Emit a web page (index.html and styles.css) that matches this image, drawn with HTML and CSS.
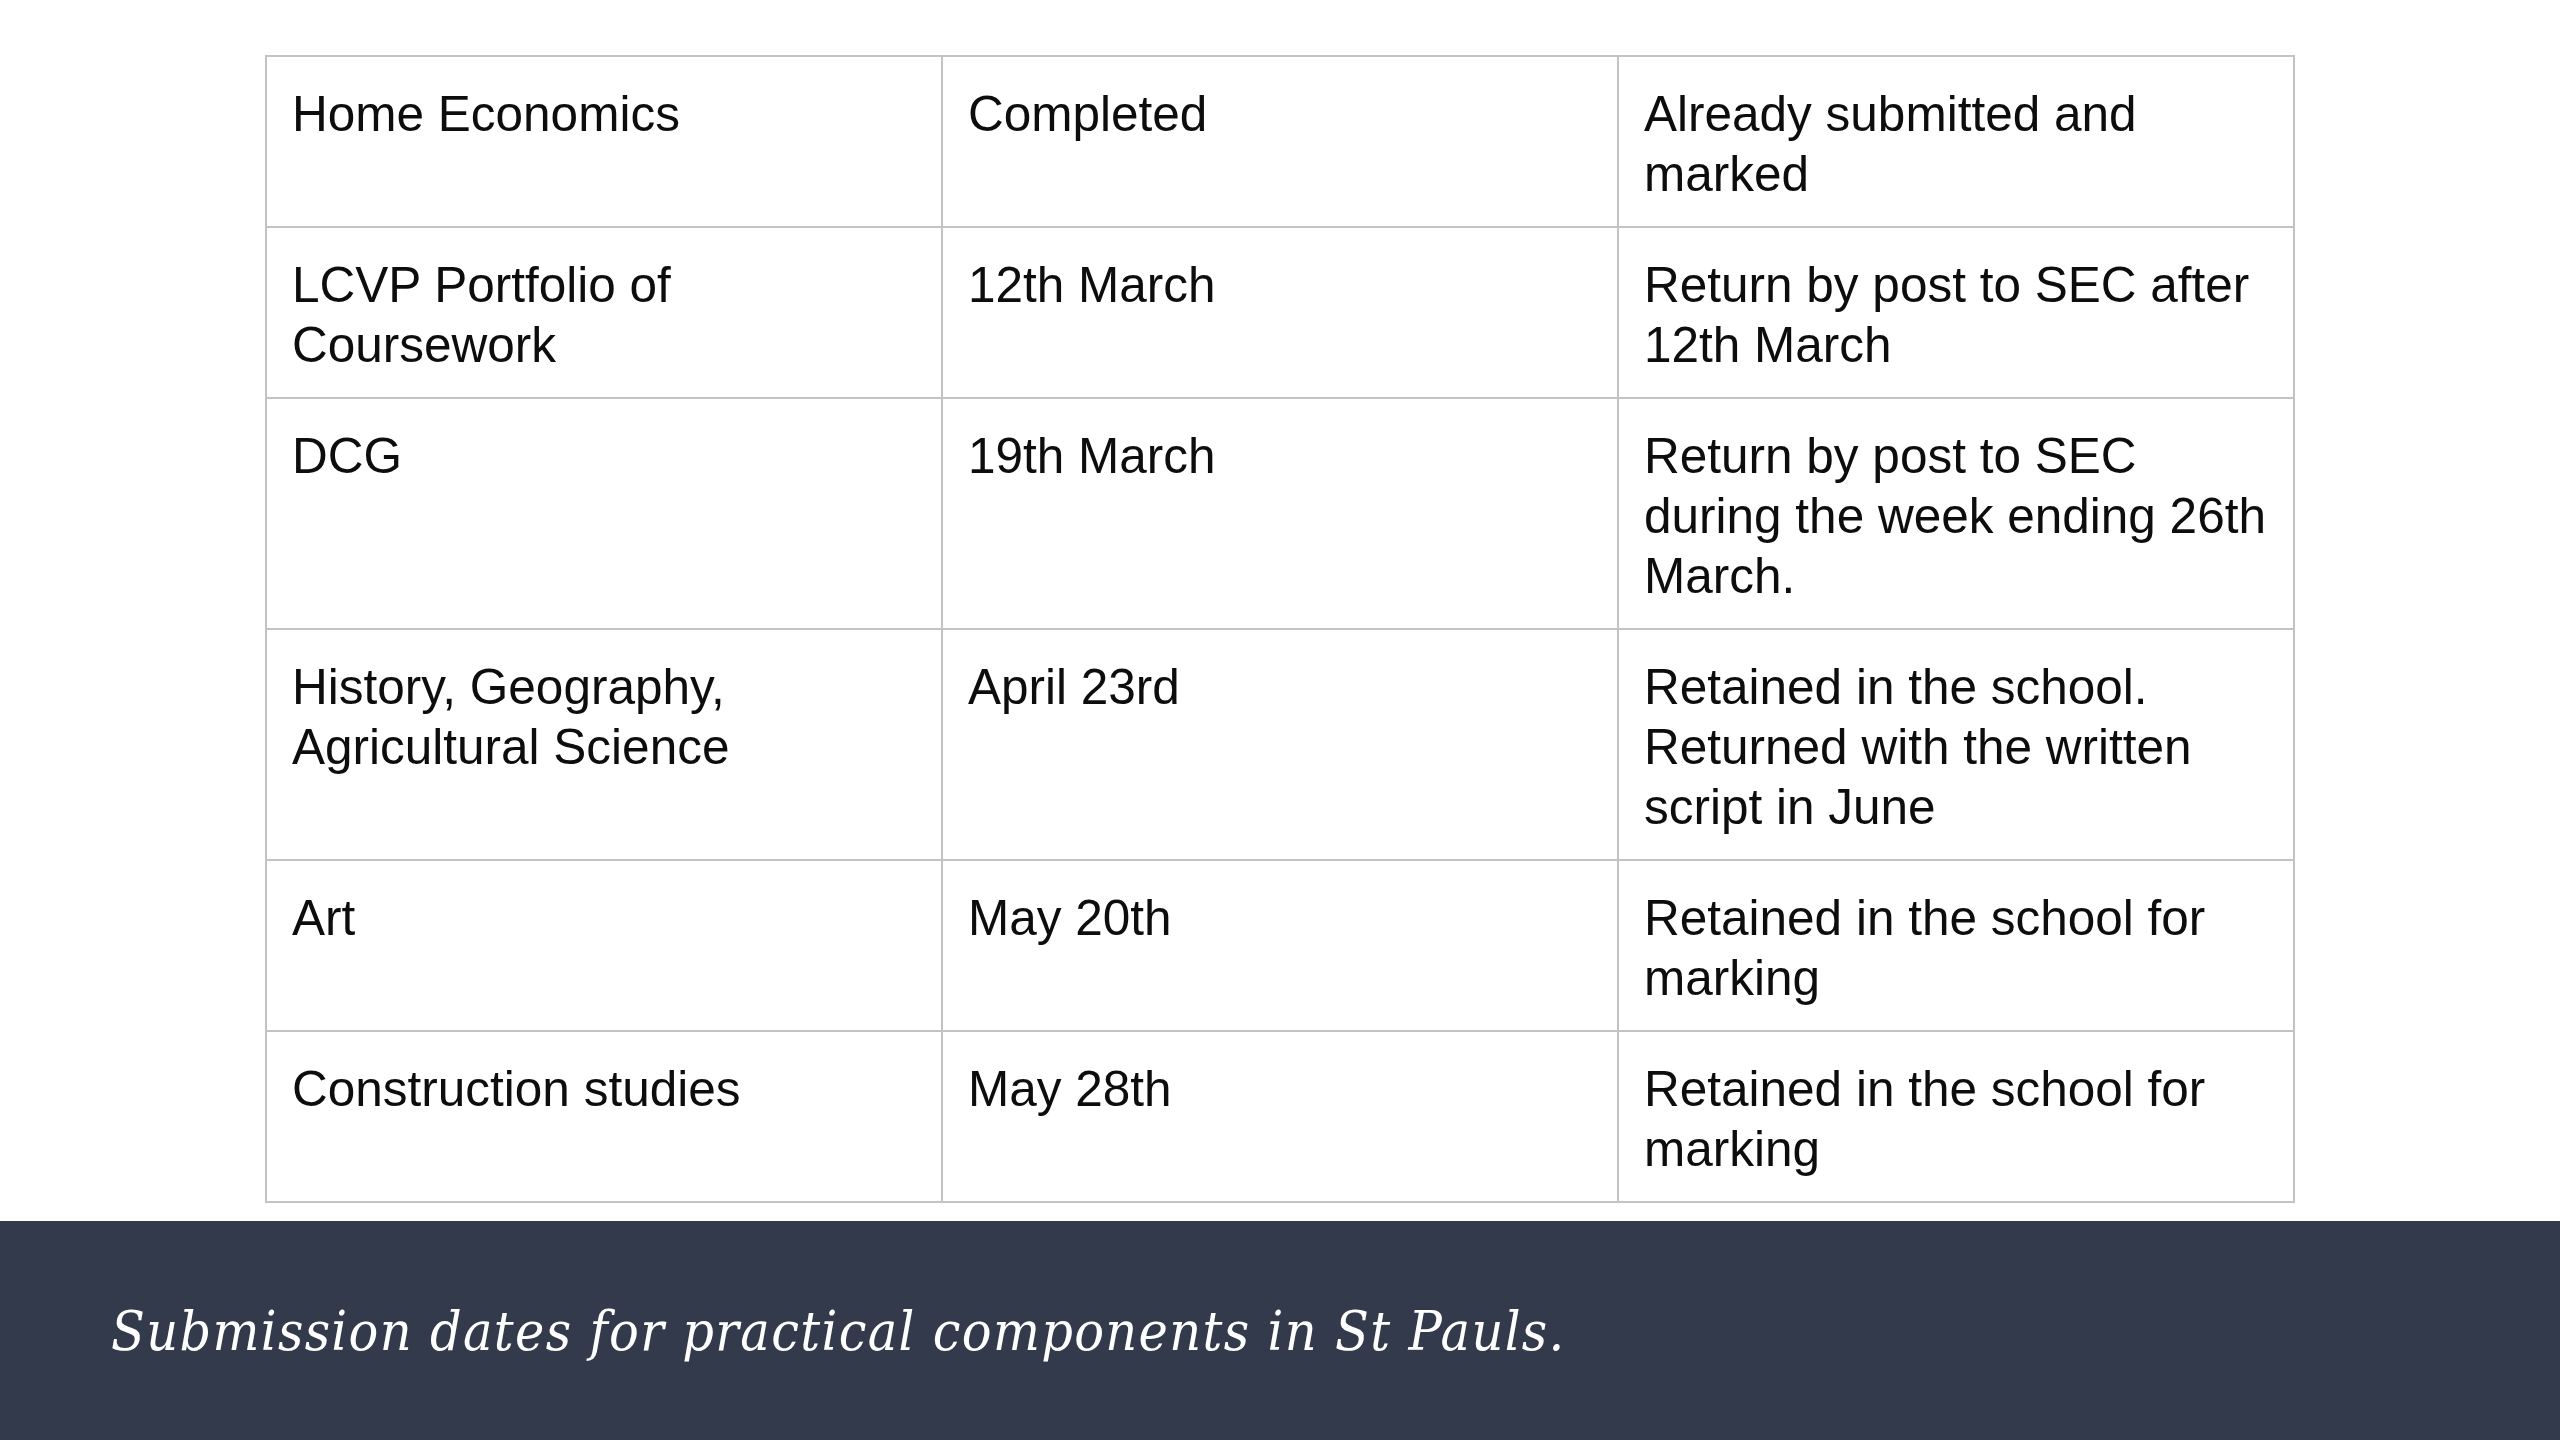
FILE: index.html
```html
<!DOCTYPE html>
<html>
<head>
<meta charset="utf-8">
<link rel="stylesheet" href="styles.css">
</head>
<body>
<div class="slide">
  <div class="table-wrap">
    <table class="schedule">
      <tr><td>Home Economics</td><td>Completed</td><td>Already submitted and marked</td></tr>
      <tr><td>LCVP Portfolio of Coursework</td><td>12th March</td><td>Return by post to SEC after 12th March</td></tr>
      <tr><td>DCG</td><td>19th March</td><td>Return by post to SEC during the week ending 26th March.</td></tr>
      <tr><td>History, Geography, Agricultural Science</td><td>April 23rd</td><td>Retained in the school. Returned with the written script in June</td></tr>
      <tr><td>Art</td><td>May 20th</td><td>Retained in the school for marking</td></tr>
      <tr><td>Construction studies</td><td>May 28th</td><td>Retained in the school for marking</td></tr>
    </table>
  </div>
  <div class="caption">
    <p class="caption-text">Submission dates for practical components in St Pauls.</p>
  </div>
</div>
</body>
</html>
```
FILE: styles.css
```css
html, body {
  margin: 0;
  padding: 0;
  background: #ffffff;
}
.slide {
  width: 2560px;
  height: 1440px;
  display: flex;
  flex-direction: column;
  overflow: hidden;
}
.table-wrap {
  display: flex;
  justify-content: center;
  padding-top: 55px;
  height: 1166px;
}
.schedule {
  border-collapse: collapse;
  width: 2030px;
  height: 1146px;
  table-layout: fixed;
  font-family: "Liberation Sans", Arial, sans-serif;
  font-size: 49.5px;
  line-height: 60px;
  color: #0d0d0d;
}
.schedule td {
  border: 2px solid #c3c3c3;
  vertical-align: top;
  padding: 27px 25px 22px 25px;
  width: 33.33%;
}
.caption {
  flex: 1;
  background: #323a4b;
  display: flex;
  align-items: center;
  padding-left: 111px;
}
.caption-text {
  margin: 0;
  color: #ffffff;
  font-family: "DejaVu Serif Condensed", "Liberation Serif", serif;
  font-style: italic;
  font-size: 55px;
  letter-spacing: 1.35px;
  padding-bottom: 0;
}
```
